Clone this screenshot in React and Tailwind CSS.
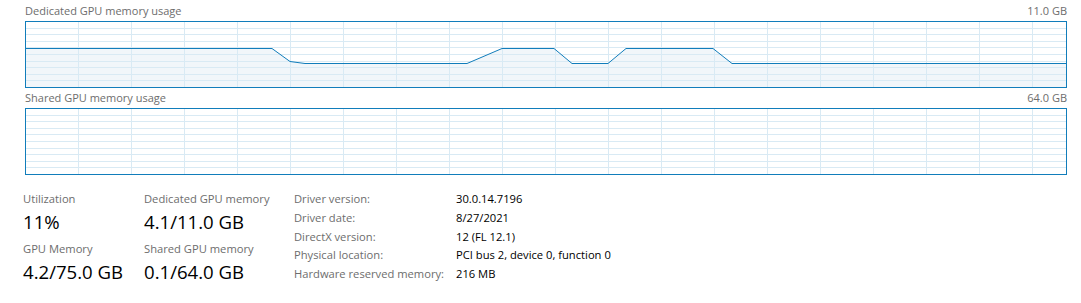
import React from "react";

const W = 1040;
const H = 65;
const FONT = { fontFamily: '"Open Sans", "Noto Sans", sans-serif' };

function Grid() {
  const v = [];
  for (let k = 0; k <= 18; k++) v.push(52 + 53 * k);
  const h = [];
  for (let k = 1; k <= 9; k++) h.push(Math.round(6.6 * k) - 1);
  return (
    <g shapeRendering="crispEdges">
      {h.map((y) => (
        <rect key={"h" + y} x={0} y={y} width={W} height={1} fill="#d9eaf4" />
      ))}
      {v.map((x) => (
        <rect key={"v" + x} x={x} y={0} width={1} height={H} fill="#d9eaf4" />
      ))}
    </g>
  );
}

const PTS = [
  [0, 26.5],
  [246, 26.5],
  [264, 39.5],
  [279, 41.5],
  [441, 41.5],
  [476, 26.5],
  [528, 26.5],
  [546, 41.5],
  [582, 41.5],
  [600, 26.5],
  [687, 26.5],
  [706, 41.5],
  [1040, 41.5],
];

function Chart({ data }) {
  const line = data ? data.map((p) => p.join(",")).join(" ") : null;
  const area = data ? `0,${H} ` + line + ` ${W},${H}` : null;
  return (
    <div className="border border-[#117dbb] w-[1042px] h-[67px]">
      <svg width={W} height={H} className="block">
        {area && <polygon points={area} fill="#f1f6fa" />}
        <Grid />
        {line && (
          <polyline points={line} fill="none" stroke="#117dbb" strokeWidth="1" />
        )}
      </svg>
    </div>
  );
}

function Header({ left, right }) {
  return (
    <div className="flex justify-between w-[1042px] text-[11px] leading-[16px] text-[#6d6d6d]">
      <span>{left}</span>
      <span>{right}</span>
    </div>
  );
}

function Stat({ label, value, className }) {
  return (
    <div className={className}>
      <div className="text-[11.2px] leading-[18px] text-[#6d6d6d]">{label}</div>
      <div className="mt-[2px] text-[18.6px] leading-[24px] text-black">{value}</div>
    </div>
  );
}

const DETAILS = [
  ["Driver version:", "30.0.14.7196"],
  ["Driver date:", "8/27/2021"],
  ["DirectX version:", "12 (FL 12.1)"],
  ["Physical location:", "PCI bus 2, device 0, function 0"],
  ["Hardware reserved memory:", "216 MB"],
];

export default function App() {
  return (
    <div className="w-[1081px] h-[303px] bg-white overflow-hidden" style={FONT}>
      <div className="pl-[25px] pt-[3px]">
        <Header left="Dedicated GPU memory usage" right="11.0 GB" />
        <div className="mt-[2px]">
          <Chart data={PTS} />
        </div>
        <div className="mt-[2px]">
          <Header left="Shared GPU memory usage" right="64.0 GB" />
        </div>
        <div className="mt-[2px]">
          <Chart data={null} />
        </div>
      </div>
      <div className="flex mt-[15px] pl-[23px]">
        <div className="w-[121px] flex flex-col gap-[6px]">
          <Stat label="Utilization" value="11%" />
          <Stat label="GPU Memory" value="4.2/75.0 GB" />
        </div>
        <div className="w-[150px] flex flex-col gap-[6px]">
          <Stat label="Dedicated GPU memory" value="4.1/11.0 GB" />
          <Stat label="Shared GPU memory" value="0.1/64.0 GB" />
        </div>
        <div className="grid grid-cols-[162px_auto] text-[11.2px] leading-[17.75px]">
          {DETAILS.map(([k, v]) => (
            <React.Fragment key={k}>
              <div className="text-[#6d6d6d]">{k}</div>
              <div className="text-black">{v}</div>
            </React.Fragment>
          ))}
        </div>
      </div>
    </div>
  );
}
